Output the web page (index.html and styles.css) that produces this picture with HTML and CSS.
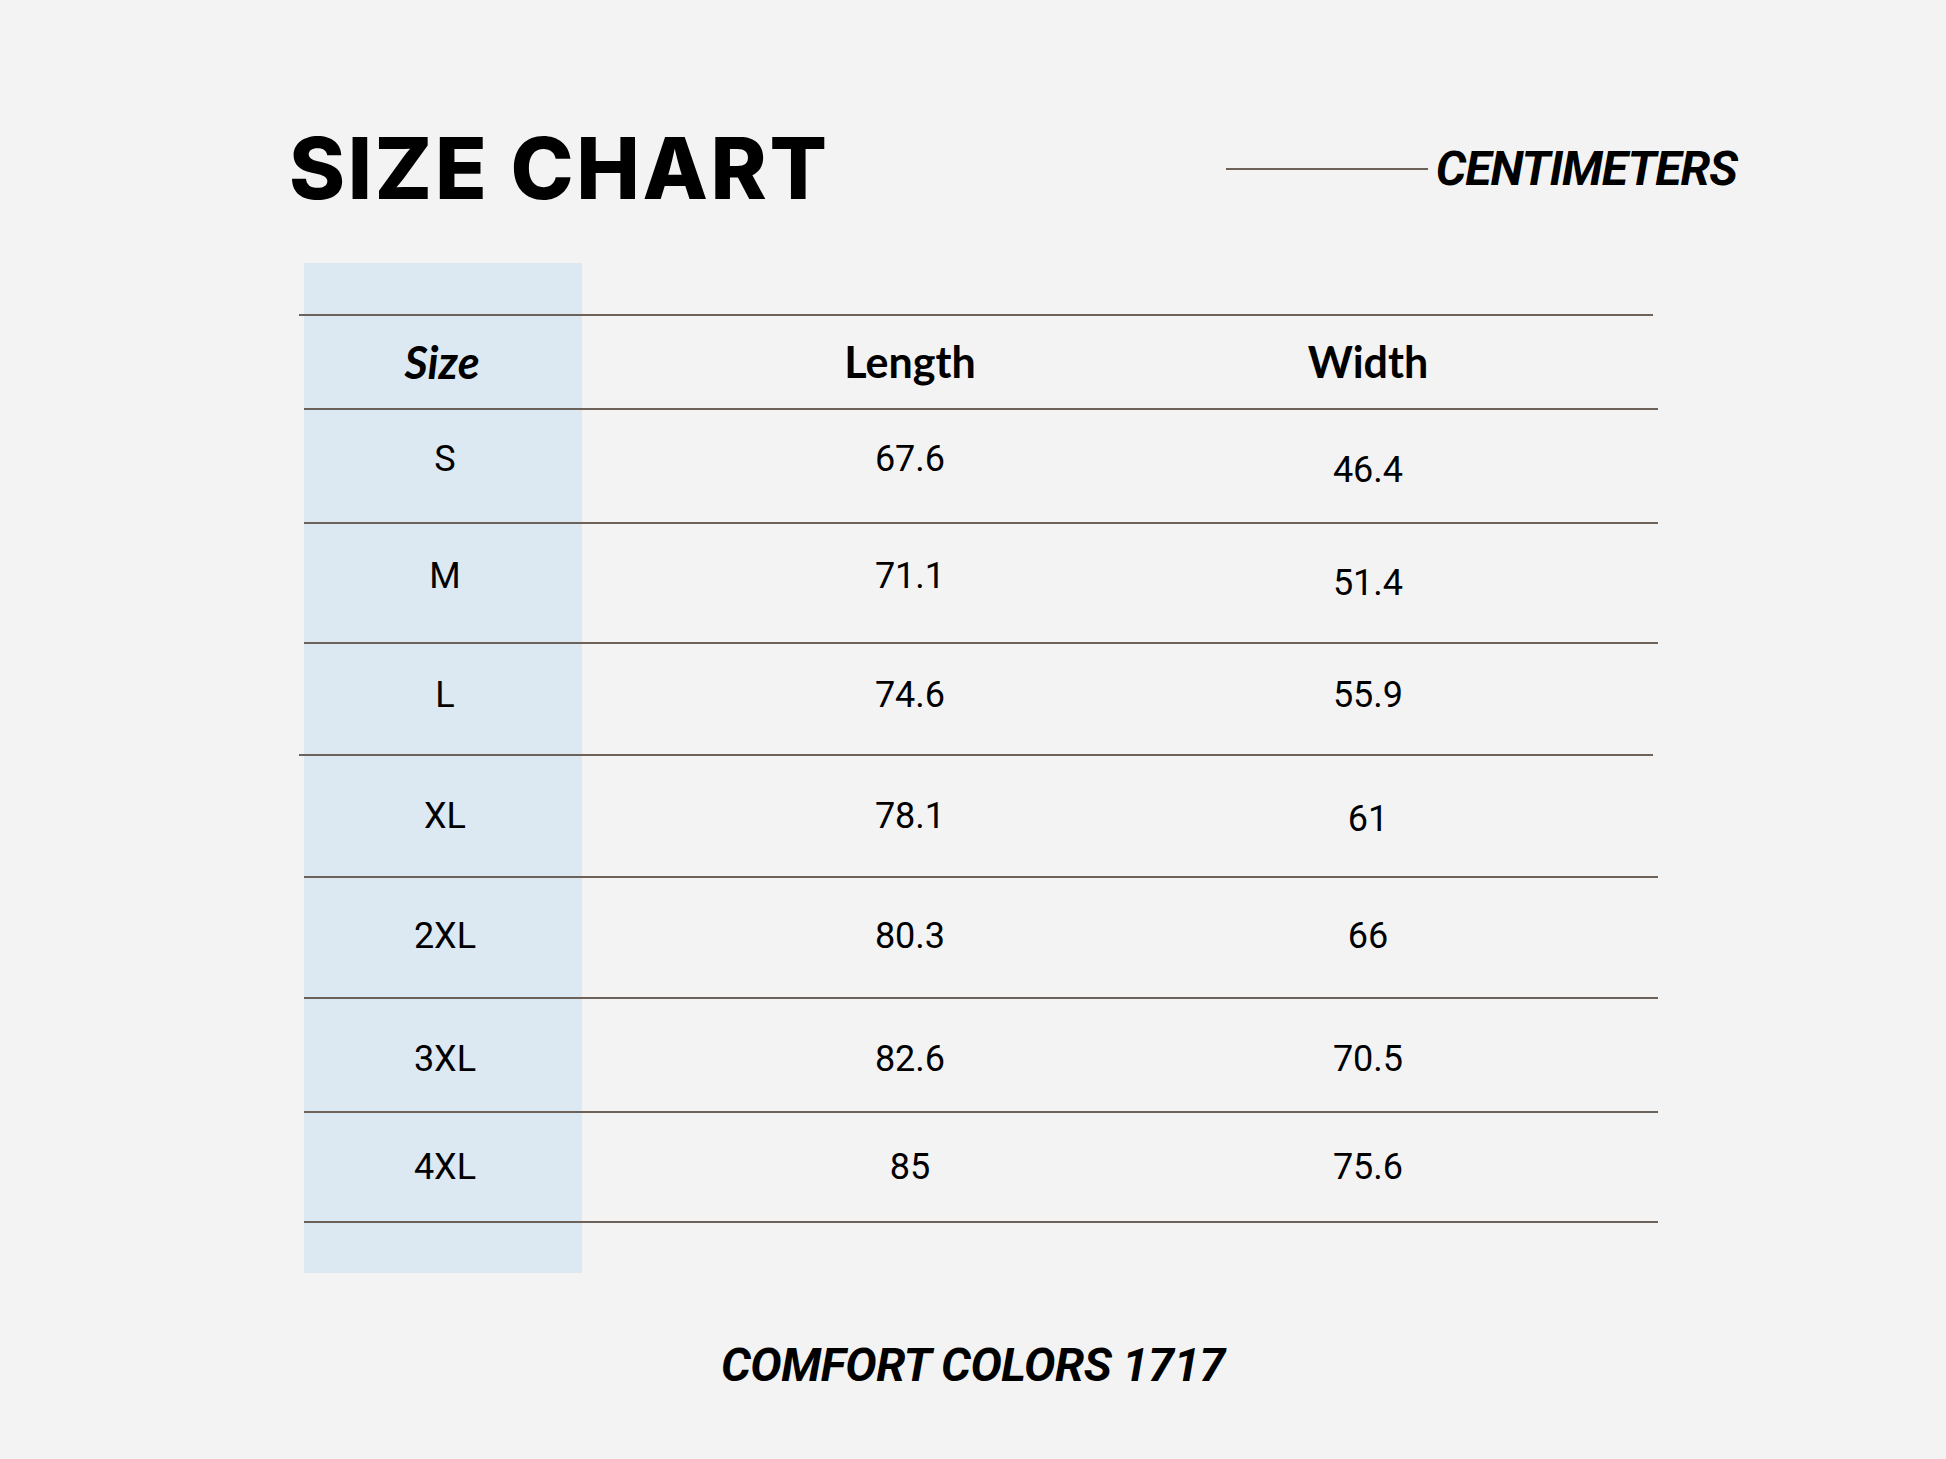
FILE: index.html
```html
<!DOCTYPE html>
<html lang="en">
<head>
<meta charset="utf-8">
<title>Size Chart</title>
<link rel="stylesheet" href="styles.css">
</head>
<body>
<main class="page">
  <header class="top">
    <h1 class="title">SIZE CHART</h1>
    <div class="unit">
      <span class="unit-rule"></span>
      <span class="unit-label">CENTIMETERS</span>
    </div>
  </header>

  <section class="chart">
    <div class="row head shift">
      <div class="cell size-h">Size</div>
      <div class="cell">Length</div>
      <div class="cell">Width</div>
    </div>
    <div class="row r-s">
      <div class="cell up">S</div>
      <div class="cell up">67.6</div>
      <div class="cell down">46.4</div>
    </div>
    <div class="row r-m">
      <div class="cell up">M</div>
      <div class="cell up">71.1</div>
      <div class="cell">51.4</div>
    </div>
    <div class="row r-l">
      <div class="cell up-s">L</div>
      <div class="cell up-s">74.6</div>
      <div class="cell up-s">55.9</div>
    </div>
    <div class="row r-xl shift">
      <div class="cell">XL</div>
      <div class="cell">78.1</div>
      <div class="cell down-s">61</div>
    </div>
    <div class="row r-2xl">
      <div class="cell up-xs">2XL</div>
      <div class="cell up-xs">80.3</div>
      <div class="cell up-xs">66</div>
    </div>
    <div class="row r-3xl">
      <div class="cell down">3XL</div>
      <div class="cell down">82.6</div>
      <div class="cell down">70.5</div>
    </div>
    <div class="row r-4xl">
      <div class="cell">4XL</div>
      <div class="cell">85</div>
      <div class="cell">75.6</div>
    </div>
    <div class="row end"></div>
  </section>

  <footer class="foot">COMFORT COLORS 1717</footer>
</main>
</body>
</html>
```

FILE: styles.css
```css
* { box-sizing: border-box; }

html, body {
  margin: 0;
  padding: 0;
  background: #f3f3f3;
}

body {
  width: 1946px;
  height: 1459px;
  overflow: hidden;
  color: #000;
  font-family: Roboto, "Liberation Sans", sans-serif;
}

.page {
  padding-top: 125px;
}

.top {
  display: flex;
  align-items: center;
  justify-content: space-between;
  width: 1448px;
  margin-left: 289px;
  height: 88px;
}

.title {
  margin: 0;
  font-family: Inter, "Liberation Sans", sans-serif;
  font-weight: 800;
  font-size: 85px;
  line-height: 88px;
  letter-spacing: 2.6px;
}

.unit {
  display: flex;
  align-items: center;
  gap: 8px;
}

.unit-rule {
  display: block;
  width: 202px;
  height: 2px;
  background: #6d6259;
}

.unit-label {
  font-family: Roboto, "Liberation Sans", sans-serif;
  font-weight: 700;
  font-style: italic;
  font-size: 48px;
  letter-spacing: -1px;
  line-height: 1;
}

.chart {
  margin-top: 50px;
  margin-left: 304px;
  width: 1354px;
  padding-top: 51px;
  padding-bottom: 50px;
  background-image: linear-gradient(to right, #dce8f2 0, #dce8f2 278px, transparent 278px);
}

.row {
  display: grid;
  grid-template-columns: 278px 656px 260px 160px;
  align-items: center;
  border-top: 2px solid #6d6259;
}

.row.shift {
  margin-left: -5px;
  margin-right: 5px;
  grid-template-columns: 283px 656px 260px 155px;
}

.cell {
  text-align: center;
  font-size: 36px;
  line-height: 40px;
  font-family: Roboto, "Liberation Sans", sans-serif;
}

.cell:first-child { padding-left: 4px; }
.row.shift .cell:first-child { padding-left: 9px; }

.head { height: 94px; }
.head .cell {
  font-family: Lato, "Liberation Sans", sans-serif;
  font-weight: 700;
  font-size: 43px;
}
.head .size-h {
  font-style: italic;
  font-size: 45px;
  padding-right: 6px;
}

.r-s { height: 114px; }
.r-m { height: 120px; }
.r-l { height: 112px; }
.r-xl { height: 122px; }
.r-2xl { height: 121px; }
.r-3xl { height: 114px; }
.r-4xl { height: 110px; }
.end { height: 0; }

.up { padding-bottom: 14px; }
.up-s { padding-bottom: 8px; }
.up-xs { padding-bottom: 4px; }
.down { padding-top: 8px; }
.down-s { padding-top: 6px; }

.foot {
  margin-top: 64px;
  text-align: center;
  font-family: Roboto, "Liberation Sans", sans-serif;
  font-weight: 700;
  font-style: italic;
  font-size: 47px;
  letter-spacing: -0.5px;
  line-height: 56px;
}
```
